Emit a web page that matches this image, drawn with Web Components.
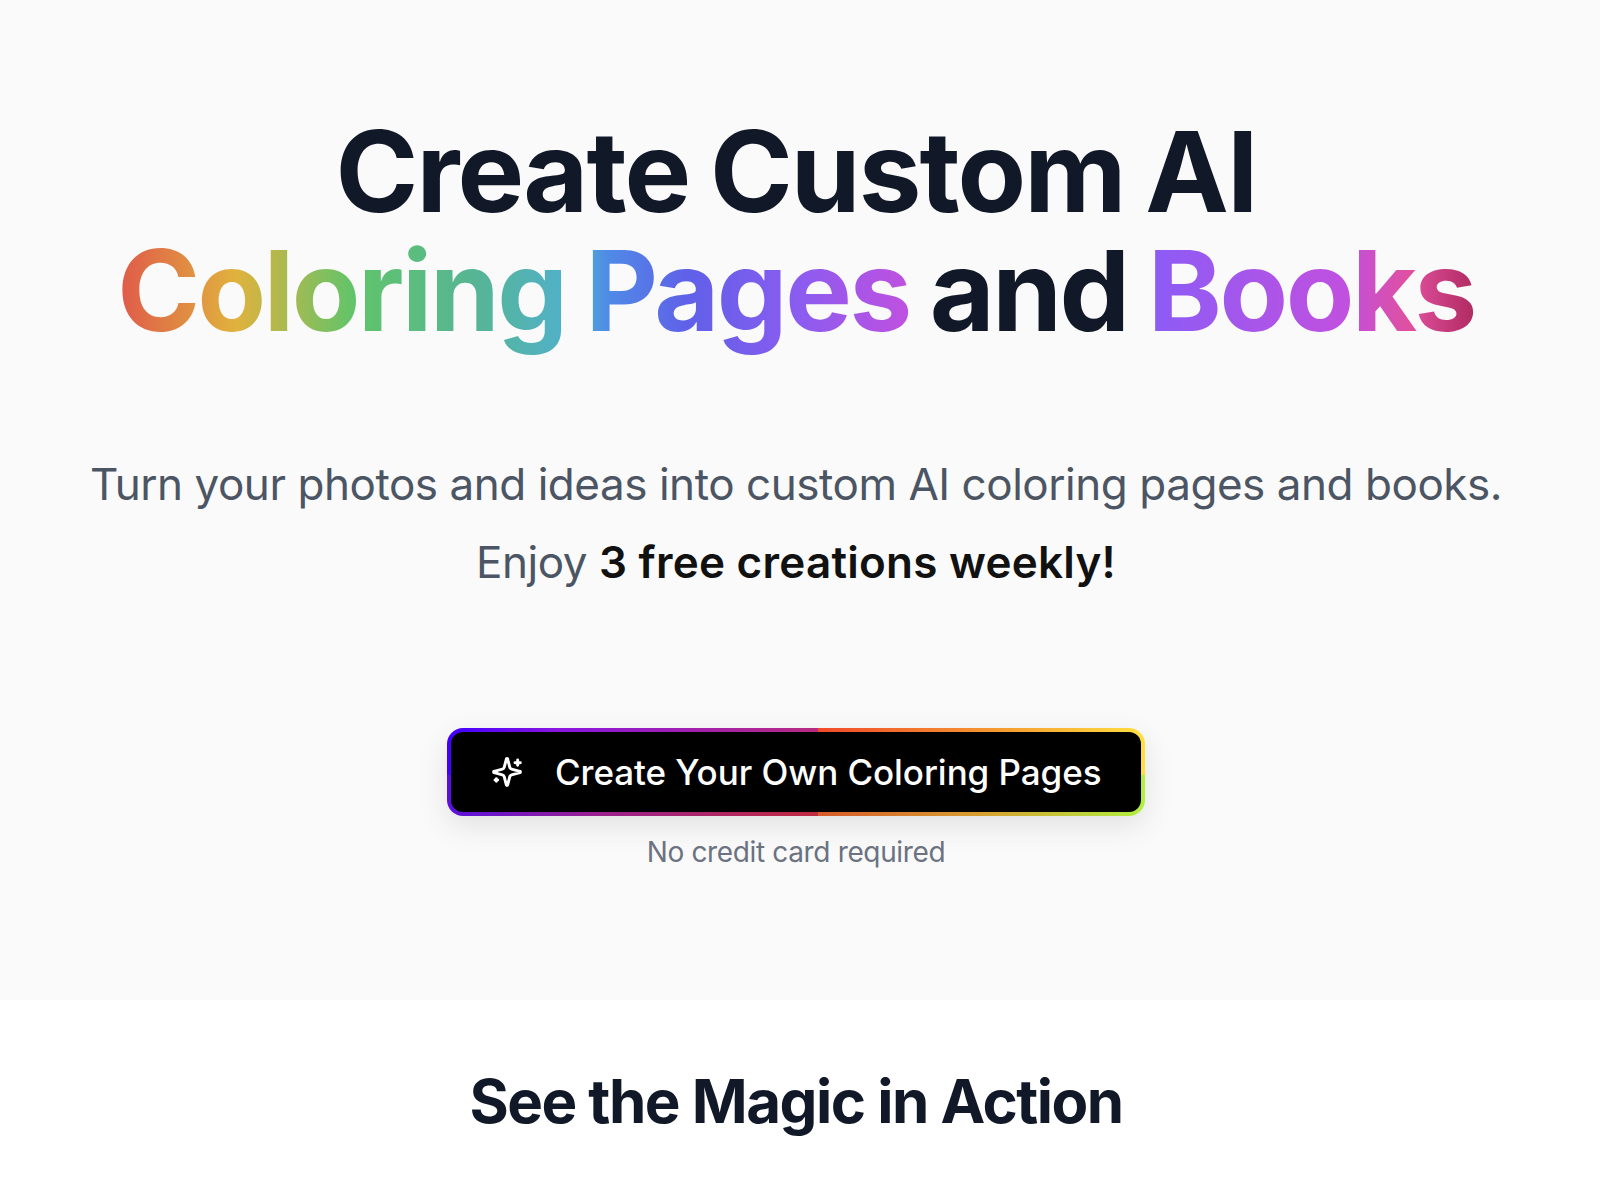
<!DOCTYPE html>
<html><head><meta charset="utf-8"><style>html,body{margin:0;background:#fff}</style></head><body>
<hero-section></hero-section><magic-section></magic-section>
<script>
class HeroSection extends HTMLElement{constructor(){super();this.attachShadow({mode:'open'}).innerHTML=`<style>
:host{display:block;box-sizing:border-box;height:1000px;background:#fafafa;padding:112px 8px 0 0;font-family:Inter,sans-serif;text-align:center}
h1{margin:0;font-size:112px;line-height:119px;font-weight:700;color:#111827}
.l1{letter-spacing:-1.9px;word-spacing:-4px}
.l2{letter-spacing:-2.45px;word-spacing:-4px}
.g1{background:linear-gradient(90deg,#e0584a 0%,#e0b23d 15%,#60c46a 30%,#56b594 45%,#50b0d0 58%,#4f8ae6 62%,#6060e8 72%,#8b5cf0 86%,#c050e0 100%);-webkit-background-clip:text;background-clip:text;color:transparent}
.g2{background:linear-gradient(90deg,#8b5cf6 0%,#c050e0 60%,#e0509f 80%,#b02a60 100%);-webkit-background-clip:text;background-clip:text;color:transparent}
p{margin:0;font-size:44px;line-height:78px;color:#4b5563;font-weight:400;letter-spacing:-.46px}
.sub{margin-top:95px}
b{font-weight:600;color:#111;letter-spacing:.25px}
.cta{margin-top:127px;display:flex;flex-direction:column;align-items:center}
.note{font-size:28px;line-height:40px;color:#6b7280;margin-top:16px;letter-spacing:-.35px}
</style>
<h1><span class="l1">Create Custom AI</span><br><span class="l2"><span class="g1">Coloring Pages</span> and <span class="g2">Books</span></span></h1>
<div class="sub"><p>Turn your photos and ideas into custom AI coloring pages and books.</p><p>Enjoy <b>3 free creations weekly!</b></p></div>
<div class="cta"><cta-button>Create Your Own Coloring Pages</cta-button><div class="note">No credit card required</div></div>`}}
class CtaButton extends HTMLElement{constructor(){super();this.attachShadow({mode:'open'}).innerHTML=`<style>
:host{display:inline-flex;box-sizing:border-box;width:698px;height:88px;border-radius:16px;padding:4px;
background:
linear-gradient(90deg,#4000ff,#8a16e0 30%,#b82a80 100%) 0 0/371px 47px no-repeat,
linear-gradient(90deg,#f04a2a,#f59a30 55%,#ffe040 100%) 371px 0/327px 47px no-repeat,
linear-gradient(90deg,#5a10e0,#9a2090 40%,#c02a40 100%) 0 47px/371px 41px no-repeat,
linear-gradient(90deg,#d85a2a,#d8a030 50%,#b0f040 100%) 371px 47px/327px 41px no-repeat;
box-shadow:0 10px 30px rgba(0,0,0,.1)}
.i{display:flex;flex:1;align-items:center;gap:32px;background:#000;color:#fff;border-radius:12px;padding:0 36px 0 40px;font-size:35px;font-weight:550;letter-spacing:-.06px}
svg{width:32px;height:32px;flex:none}
</style><div class="i"><svg viewBox="0 0 24 24" fill="none" stroke="#fff" stroke-width="2.2" stroke-linecap="round" stroke-linejoin="round"><path d="M9.9 15.5A2 2 0 0 0 8.5 14.1l-6.1-1.6a.5.5 0 0 1 0-1l6.1-1.6a2 2 0 0 0 1.4-1.4l1.6-6.1a.5.5 0 0 1 1 0l1.6 6.1a2 2 0 0 0 1.4 1.4l6.1 1.6a.5.5 0 0 1 0 1l-6.1 1.6a2 2 0 0 0-1.4 1.4l-1.6 6.1a.5.5 0 0 1-1 0z"/><path d="M20 3v4M22 5h-4M4 17v2M5 18H3"/></svg><slot></slot></div>`}}
class MagicSection extends HTMLElement{constructor(){super();this.attachShadow({mode:'open'}).innerHTML=`<style>
:host{display:block;height:200px;background:#fff;font-family:Inter,sans-serif;text-align:center;padding:65px 8px 0 0;box-sizing:border-box}
h2{margin:0;font-size:60px;line-height:72px;font-weight:700;letter-spacing:-1.5px;color:#111827}
</style><h2>See the Magic in Action</h2>`}}
customElements.define('cta-button',CtaButton);customElements.define('hero-section',HeroSection);customElements.define('magic-section',MagicSection);
</script></body></html>
